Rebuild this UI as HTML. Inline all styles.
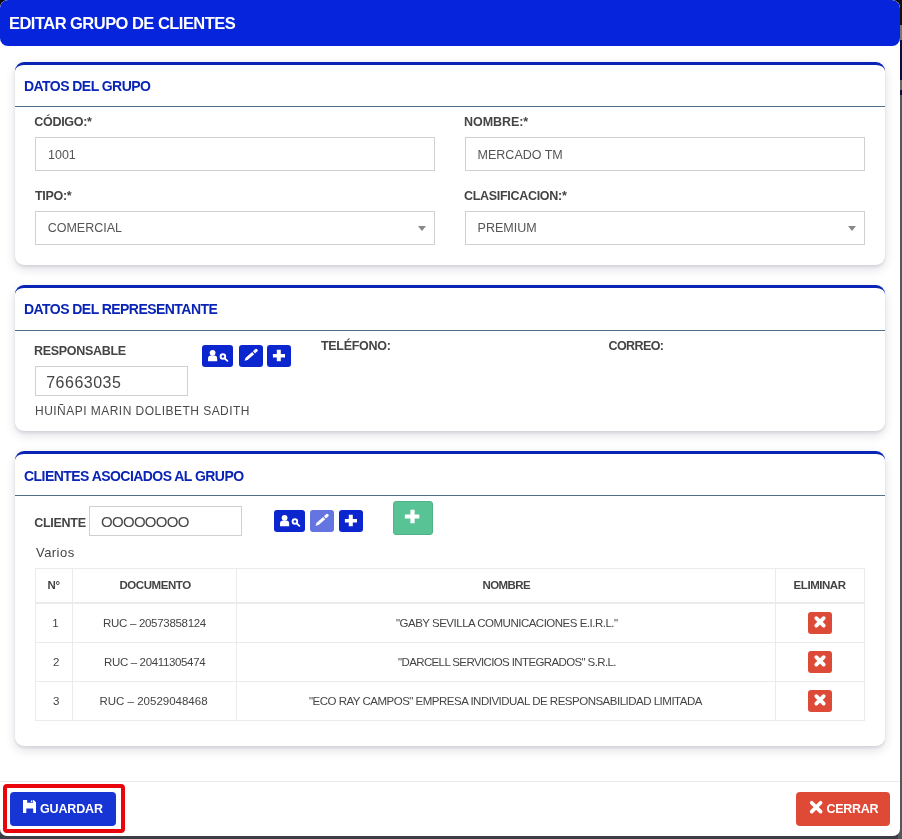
<!DOCTYPE html>
<html><head><meta charset="utf-8">
<style>
*{box-sizing:border-box;margin:0;padding:0}
html,body{width:902px;height:839px;overflow:hidden;background:#3b3e44;font-family:"Liberation Sans",sans-serif}
.bg1{position:absolute;left:898px;top:0;width:4px;height:839px;background:linear-gradient(#111 0,#111 25px,#777 25px,#777 40px,#0b0c3c 40px,#0b0c3c 80px,#666 80px,#666 90px,#0b0c3c 90px,#0b0c3c 95px,#55575c 95px)}
.modal{will-change:transform;position:absolute;left:0;top:0;width:900px;height:836px;background:#fff;border-radius:8px 8px 7px 7px;overflow:hidden}
.hdr{position:absolute;left:0;top:0;width:900px;height:46px;background:#0524dc;border-radius:8px}
.t{position:absolute;white-space:nowrap;line-height:1}
.title{left:9px;top:15px;color:#fff;font-weight:bold;font-size:16.5px;letter-spacing:-0.53px}
.card{position:absolute;left:15px;width:870px;background:#fff;border-top:3px solid #0a24b5;border-radius:9px;box-shadow:0 2px 3px rgba(20,20,60,.10),0 4px 11px rgba(20,20,60,.13)}
.card .ch{position:absolute;left:0;top:0;width:100%;border-bottom:1px solid #4f6f8a}
.chd{color:#0a24b5;font-weight:bold;font-size:14px;letter-spacing:-0.55px}
.lbl{color:#444;font-weight:bold;font-size:12.5px;letter-spacing:-0.3px}
.inp{position:absolute;border:1px solid #d0d0d0;background:#fff}
.val{color:#555;font-size:12.5px}
.arrow{position:absolute;right:8px;top:14px;width:0;height:0;border-left:4px solid transparent;border-right:4px solid transparent;border-top:5px solid #888}
.btn{position:absolute;border-radius:3px;background:#0b25cf}
.btn svg{position:absolute;left:0;top:0}
table{position:absolute;border-collapse:collapse}
.cell{position:absolute;border:1px solid #ebebeb}
.th{color:#444;font-weight:bold;font-size:11.5px;letter-spacing:-0.45px}
.td{color:#444;font-size:11.5px;letter-spacing:-0.5px}
.del{position:absolute;left:808px;width:24px;height:22px;background:#dd4a37;border-radius:3px}
</style></head><body>
<div style="position:absolute;left:0;top:0;width:902px;height:25px;background:#0a0a0a"></div><div class="bg1"></div>
<div class="modal">
  <div class="hdr"></div>
  <div class="t title">EDITAR GRUPO DE CLIENTES</div>

  <!-- card 1 -->
  <div class="card" style="top:62px;height:203px"><div class="ch" style="height:42px"></div></div>
  <div class="t chd" style="left:24px;top:79px">DATOS DEL GRUPO</div>
  <div class="t lbl" style="left:34.3px;top:116px">CÓDIGO:*</div>
  <div class="inp" style="left:35px;top:137px;width:400px;height:34px"></div>
  <div class="t val" style="left:48px;top:149px">1001</div>
  <div class="t lbl" style="left:464px;top:116px;letter-spacing:-0.05px">NOMBRE:*</div>
  <div class="inp" style="left:465px;top:137px;width:400px;height:34px"></div>
  <div class="t val" style="left:477.6px;top:149px">MERCADO TM</div>
  <div class="t lbl" style="left:35px;top:190px">TIPO:*</div>
  <div class="inp" style="left:35px;top:211px;width:400px;height:34px"><i class="arrow"></i></div>
  <div class="t val" style="left:47.7px;top:222px">COMERCIAL</div>
  <div class="t lbl" style="left:464px;top:190px">CLASIFICACION:*</div>
  <div class="inp" style="left:465px;top:211px;width:400px;height:34px"><i class="arrow"></i></div>
  <div class="t val" style="left:477.6px;top:222px">PREMIUM</div>

  <!-- card 2 -->
  <div class="card" style="top:285px;height:146px"><div class="ch" style="height:43px"></div></div>
  <div class="t chd" style="left:24px;top:302px">DATOS DEL REPRESENTANTE</div>
  <div class="t lbl" style="left:34px;top:345px">RESPONSABLE</div>
  <div class="btn" style="left:202px;top:345px;width:31px;height:22px"><svg width="31" height="22" viewBox="0 0 31 22"><circle cx="10.6" cy="7.8" r="2.9" fill="#fff"/><path d="M6,16.2V13.8Q6,10.6 9.2,10.6H12Q15.2,10.6 15.2,13.8V16.2Z" fill="#fff"/><circle cx="20.9" cy="11.5" r="2.3" fill="none" stroke="#fff" stroke-width="1.9"/><path d="M22.6,13.3L25.4,15.9" stroke="#fff" stroke-width="1.8" stroke-linecap="round"/></svg></div>
  <div class="btn" style="left:239px;top:345px;width:24px;height:22px"><svg width="24" height="22" viewBox="0 0 24 22"><path d="M5.5,15.7L6.61,12.73L13.2,6.88L15.18,9.13L8.59,14.97Z" fill="#fff"/><path d="M13.95,6.22L16.4,4.05Q17.3,3.4 18.1,4.2L18.5,4.7Q19.1,5.5 18.4,6.3L15.93,8.47Z" fill="#fff"/></svg></div>
  <div class="btn" style="left:267px;top:345px;width:24px;height:22px"><svg width="24" height="22" viewBox="0 0 24 22"><path d="M9.8,4.8H13.8V9H18V12.6H13.8V16.2H9.8V12.6H5.9V9H9.8Z" fill="#fff"/></svg></div>
  <div class="t lbl" style="left:321px;top:340px">TELÉFONO:</div>
  <div class="t lbl" style="left:608.5px;top:340px;letter-spacing:-0.6px">CORREO:</div>
  <div class="inp" style="left:35px;top:366px;width:153px;height:30px"></div>
  <div class="t val" style="left:46.2px;top:374.5px;font-size:16px;color:#444;letter-spacing:0.5px">76663035</div>
  <div class="t val" style="left:35px;top:404.5px;font-size:12px;color:#4a4a4a;letter-spacing:0.47px">HUIÑAPI MARIN DOLIBETH SADITH</div>

  <!-- card 3 -->
  <div class="card" style="top:451px;height:295px"><div class="ch" style="height:42px"></div></div>
  <div class="t chd" style="left:24px;top:468.5px">CLIENTES ASOCIADOS AL GRUPO</div>
  <div class="t lbl" style="left:34.3px;top:517px">CLIENTE</div>
  <div class="inp" style="left:89px;top:506px;width:153px;height:30px"></div>
  <div class="t val" style="left:101px;top:513.5px;font-size:15px;color:#484848;letter-spacing:-0.7px">OOOOOOOO</div>
  <div class="btn" style="left:274px;top:510px;width:31px;height:22px"><svg width="31" height="22" viewBox="0 0 31 22"><circle cx="10.6" cy="7.8" r="2.9" fill="#fff"/><path d="M6,16.2V13.8Q6,10.6 9.2,10.6H12Q15.2,10.6 15.2,13.8V16.2Z" fill="#fff"/><circle cx="20.9" cy="11.5" r="2.3" fill="none" stroke="#fff" stroke-width="1.9"/><path d="M22.6,13.3L25.4,15.9" stroke="#fff" stroke-width="1.8" stroke-linecap="round"/></svg></div>
  <div class="btn" style="left:310px;top:510px;width:24px;height:22px;background:#6474e0"><svg width="24" height="22" viewBox="0 0 24 22"><path d="M5.5,15.7L6.61,12.73L13.2,6.88L15.18,9.13L8.59,14.97Z" fill="#fff"/><path d="M13.95,6.22L16.4,4.05Q17.3,3.4 18.1,4.2L18.5,4.7Q19.1,5.5 18.4,6.3L15.93,8.47Z" fill="#fff"/></svg></div>
  <div class="btn" style="left:339px;top:510px;width:24px;height:22px"><svg width="24" height="22" viewBox="0 0 24 22"><path d="M9.8,4.8H13.8V9H18V12.6H13.8V16.2H9.8V12.6H5.9V9H9.8Z" fill="#fff"/></svg></div>
  <div class="btn" style="left:393px;top:501px;width:40px;height:34px;background:#58c394;border:1px solid #4fb384"><svg style="left:-1px;top:-1px" width="40" height="34" viewBox="0 0 40 34"><path d="M17.4,8.8H21.6V13.6H26.3V17.4H21.6V22.3H17.4V17.4H11.8V13.6H17.4Z" fill="#fff"/></svg></div>
  <div class="t val" style="left:36px;top:545.7px;font-size:13px;color:#444;letter-spacing:0.45px">Varios</div>

  <!-- table -->
  <div class="cell" style="left:35px;top:568px;width:830px;height:153px"></div>
  <div style="position:absolute;left:72px;top:568px;width:1px;height:153px;background:#ebebeb"></div>
  <div style="position:absolute;left:236px;top:568px;width:1px;height:153px;background:#ebebeb"></div>
  <div style="position:absolute;left:775px;top:568px;width:1px;height:153px;background:#ebebeb"></div>
  <div style="position:absolute;left:35px;top:602px;width:830px;height:2px;background:#ebebeb"></div>
  <div style="position:absolute;left:35px;top:642px;width:830px;height:1px;background:#ebebeb"></div>
  <div style="position:absolute;left:35px;top:681px;width:830px;height:1px;background:#ebebeb"></div>
  <div class="t th" style="left:47.6px;top:580px">N°</div>
  <div class="t th" style="left:119.5px;top:580px">DOCUMENTO</div>
  <div class="t th" style="left:482.5px;top:580px;letter-spacing:-0.6px">NOMBRE</div>
  <div class="t th" style="left:793.6px;top:580px">ELIMINAR</div>

  <div class="t td" style="left:52.3px;top:618px">1</div>
  <div class="t td" style="left:103px;top:618px;letter-spacing:-0.3px">RUC – 20573858124</div>
  <div class="t td" style="left:396px;top:618px">"GABY SEVILLA COMUNICACIONES E.I.R.L."</div>
  <div class="del" style="top:612px"><svg width="24" height="22" viewBox="0 0 24 22" style="overflow:visible"><path d="M8.3,6.2L15.7,13.6M15.7,6.2L8.3,13.6" stroke="#fff" stroke-width="3.8" stroke-linecap="round"/></svg></div>
  <div class="t td" style="left:53px;top:657px">2</div>
  <div class="t td" style="left:104px;top:657px;letter-spacing:-0.35px">RUC – 20411305474</div>
  <div class="t td" style="left:398px;top:657px;letter-spacing:-0.62px">"DARCELL SERVICIOS INTEGRADOS" S.R.L.</div>
  <div class="del" style="top:651px"><svg width="24" height="22" viewBox="0 0 24 22" style="overflow:visible"><path d="M8.3,6.2L15.7,13.6M15.7,6.2L8.3,13.6" stroke="#fff" stroke-width="3.8" stroke-linecap="round"/></svg></div>
  <div class="t td" style="left:53px;top:696px">3</div>
  <div class="t td" style="left:99.5px;top:696px;letter-spacing:0px">RUC – 20529048468</div>
  <div class="t td" style="left:309px;top:696px">"ECO RAY CAMPOS" EMPRESA INDIVIDUAL DE RESPONSABILIDAD LIMITADA</div>
  <div class="del" style="top:690px"><svg width="24" height="22" viewBox="0 0 24 22" style="overflow:visible"><path d="M8.3,6.2L15.7,13.6M15.7,6.2L8.3,13.6" stroke="#fff" stroke-width="3.8" stroke-linecap="round"/></svg></div>

  <!-- footer -->
  <div style="position:absolute;left:0;top:781px;width:900px;height:1px;background:#e9ecef"></div>
  <div style="position:absolute;left:3px;top:784px;width:122px;height:49px;border:4px solid #e8060c;border-radius:4px"></div>
  <div class="btn" style="left:10px;top:792px;width:106px;height:34px;background:#1734d4;border-radius:4px"></div>
  <svg style="position:absolute;left:22.8px;top:799.8px" width="13.3" height="13.3" viewBox="0 0 13.3 13.3"><path fill-rule="evenodd" fill="#fff" d="M0,0H10.7L13.3,2.6V13.3H0Z M4.2,0H10V2.7H4.2Z M3.3,8.5H10.2V13.3H3.3Z"/><rect x="7.9" y="0.4" width="1.5" height="1.7" fill="#fff"/></svg>
  <div class="t lbl" style="left:40px;top:803px;color:#fff;letter-spacing:-0.15px">GUARDAR</div>
  <div class="btn" style="left:796px;top:792px;width:94px;height:34px;background:#df4a36;border-radius:4px"></div>
  <svg style="position:absolute;left:809.8px;top:800.8px;overflow:visible" width="12.3" height="12.3" viewBox="0 0 12.3 12.3"><path d="M1.7,1.7L10.6,10.6M10.6,1.7L1.7,10.6" stroke="#fff" stroke-width="3.7" stroke-linecap="round"/></svg>
  <div class="t lbl" style="left:826.5px;top:803px;color:#fff">CERRAR</div>
</div>
</body></html>
